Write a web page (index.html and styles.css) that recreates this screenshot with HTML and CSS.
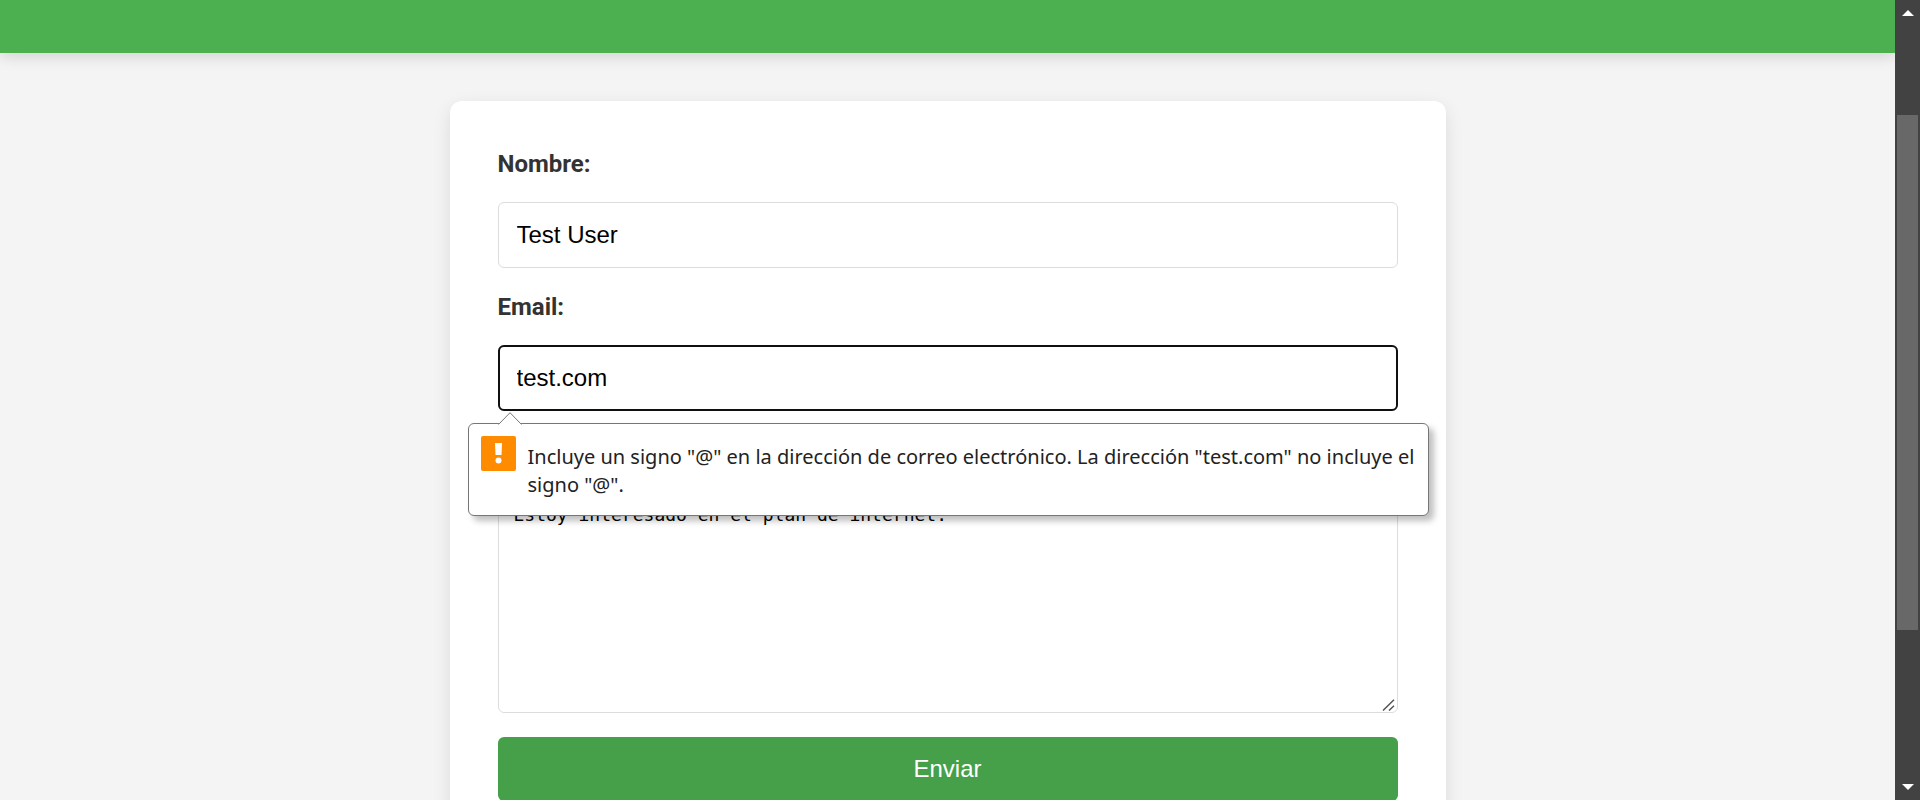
FILE: index.html
```html
<!DOCTYPE html>
<html lang="es">
<head>
<meta charset="utf-8">
<meta name="viewport" content="width=device-width, initial-scale=1">
<title>Contacto</title>
<link rel="stylesheet" href="styles.css">
</head>
<body class="window">
<div class="page">
  <header class="header"></header>
  <main class="main">
    <form class="card" novalidate>
      <div class="field">
        <label class="label" for="nombre">Nombre:</label>
        <input class="input" id="nombre" type="text" value="Test User">
      </div>
      <div class="field">
        <label class="label" for="email">Email:</label>
        <input class="input input-focused" id="email" type="email" value="test.com" aria-describedby="email-error">
        <div class="tooltip" id="email-error" role="alert">
          <svg class="tooltip-arrow" viewBox="0 0 24 13" aria-hidden="true">
            <path d="M0 13V12.5L12 .7L24 12.5V13Z" fill="#fff"/>
            <path d="M.5 12.5L12 .7L23.5 12.5" fill="none" stroke="#767676"/>
          </svg>
          <svg class="tooltip-icon" viewBox="0 0 35 35" aria-hidden="true">
            <rect width="35" height="35" rx="2" fill="#ff8c00"/>
            <path d="M14 7H21L20.5 19H14.5Z" fill="#fff"/>
            <circle cx="17.5" cy="24.5" r="3" fill="#fff"/>
          </svg>
          <p class="tooltip-text">Incluye un signo "@" en la dirección de correo electrónico. La dirección "test.com" no incluye el signo "@".</p>
        </div>
      </div>
      <div class="field">
        <label class="label" for="mensaje">Mensaje:</label>
        <textarea class="textarea" id="mensaje">Estoy interesado en el plan de internet.</textarea>
        <svg class="grip" viewBox="0 0 13 12" aria-hidden="true">
          <path d="M1 11.500L12 .8M7 11.500L12 6.800" fill="none" stroke="#555" stroke-width="1.500"/>
        </svg>
      </div>
      <button class="submit" type="submit">Enviar</button>
    </form>
  </main>
</div>
<div class="scrollbar" aria-hidden="true">
  <svg class="scroll-arrow" viewBox="0 0 12 6"><path d="M0 6L6 0L12 6Z" fill="#fff"/></svg>
  <div class="scroll-track"><div class="scroll-thumb"></div></div>
  <svg class="scroll-arrow" viewBox="0 0 12 6"><path d="M0 0L6 6L12 0Z" fill="#fff"/></svg>
</div>
</body>
</html>
```
FILE: styles.css
```css
* {
  box-sizing: border-box;
}

.window {
  display: flex;
  height: 100vh;
  margin: 0;
  overflow: hidden;
  background: #f4f4f4;
  color: #333;
  font-family: Roboto, sans-serif;
  font-size: 24px;
}

.page {
  flex: 1;
  min-width: 0;
  overflow: hidden;
}

.header {
  height: 53px;
  background: #4caf50;
  box-shadow: 0 3px 15px rgba(0, 0, 0, 0.15);
}

.main {
  padding: 48px 24px;
}

.card {
  display: flex;
  flex-direction: column;
  max-width: 996px;
  margin: 0 auto;
  padding: 48px;
  border-radius: 12px;
  background: #fff;
  box-shadow: 0 6px 18px rgba(0, 0, 0, 0.1);
}

.field {
  position: relative;
  display: flex;
  flex-direction: column;
  gap: 22px;
  margin-bottom: 24px;
}

.label {
  font-weight: 700;
  line-height: 31px;
}

.input {
  width: 100%;
  height: 66px;
  padding: 0 18px;
  border: 1px solid #ddd;
  border-radius: 6px;
  background: #fff;
  color: #000;
  font-family: "Liberation Sans", Arial, sans-serif;
  font-size: 24px;
}

.input-focused {
  outline: 2px solid #101010;
  outline-offset: -2px;
}

.textarea {
  width: 100%;
  height: 225px;
  padding: 15px;
  border: 1px solid #ddd;
  border-radius: 6px;
  background: #fff;
  color: #000;
  font-family: "DejaVu Sans Mono", monospace;
  font-size: 18px;
  resize: none;
}

.grip {
  position: absolute;
  right: 3px;
  bottom: 2px;
  width: 13px;
  height: 12px;
  pointer-events: none;
}

.submit {
  height: 64px;
  border: 0;
  border-radius: 6px;
  background: #45a049;
  color: #fff;
  font-family: "Liberation Sans", Arial, sans-serif;
  font-size: 24px;
}

.tooltip {
  position: absolute;
  top: calc(100% + 12px);
  left: -30px;
  right: -31px;
  z-index: 1;
  display: flex;
  gap: 12px;
  padding: 12px 12px 16px;
  border: 1px solid #767676;
  border-radius: 6px;
  background: #fff;
  box-shadow: 5px 5px 6px rgba(0, 0, 0, 0.25);
}

.tooltip-arrow {
  position: absolute;
  bottom: 100%;
  left: 29px;
  width: 24px;
  height: 13px;
  margin-bottom: -1px;
}

.tooltip-icon {
  flex: none;
  width: 35px;
  height: 35px;
}

.tooltip-text {
  margin: 7px 0 0;
  color: #222;
  font-family: "Noto Sans", sans-serif;
  font-size: 20px;
  line-height: 28px;
}

.scrollbar {
  display: flex;
  flex-direction: column;
  align-items: center;
  width: 25px;
  padding: 10px 0;
  background: #424242;
}

.scroll-arrow {
  width: 12px;
  height: 6px;
}

.scroll-track {
  display: flex;
  flex: 1;
  flex-direction: column;
  align-items: center;
  padding-top: 99px;
}

.scroll-thumb {
  width: 21px;
  height: 77%;
  background: #686868;
}
```
